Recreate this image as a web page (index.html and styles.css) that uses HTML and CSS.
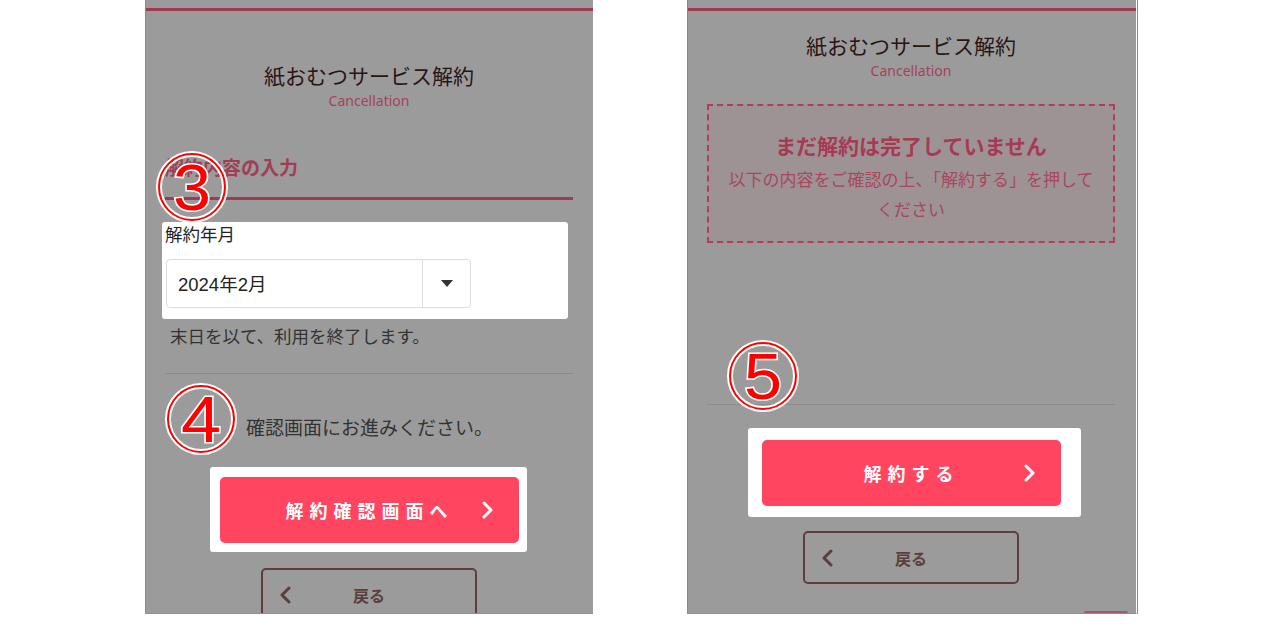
FILE: index.html
```html
<!DOCTYPE html>
<html lang="ja">
<head>
  <meta charset="UTF-8" />
  <meta name="viewport" content="width=device-width, initial-scale=1.0" />
  <title>紙おむつサービス解約</title>
  <link rel="stylesheet" href="styles.css">
</head>
<body>
  <div class="page">

    <!-- 入力画面 -->
    <section class="phone phone-left">
      <div class="topbar"></div>
      <header class="title">
        <h1>紙おむつサービス解約</h1>
        <p>Cancellation</p>
      </header>

      <h2 class="section-head">解約内容の入力</h2>

      <div class="spot field">
        <label>解約年月</label>
        <div class="select">
          <span class="select-value">2024年2月</span>
          <span class="select-btn"><span class="caret"></span></span>
        </div>
      </div>
      <p class="note">末日を以て、利用を終了します。</p>

      <hr class="rule rule-left">

      <p class="lead">確認画面にお進みください。</p>

      <div class="spot btn-wrap wrap-left">
        <button class="primary">
          <span></span>
          <span class="label">解約確認画面へ</span>
          <svg class="chev" width="12" height="18" viewBox="0 0 12 18"><polyline points="2,2 9,9 2,16" /></svg>
        </button>
      </div>

      <button class="back">
        <svg class="chev" width="12" height="18" viewBox="0 0 12 18"><polyline points="10,2 3,9 10,16" /></svg>
        <span class="label">戻る</span>
        <span></span>
      </button>

      <svg class="badge badge-3" width="76" height="76" viewBox="0 0 76 76">
        <circle cx="38" cy="38" r="33" class="ring-w" />
        <circle cx="38" cy="38" r="33" class="ring-r" />
        <text x="38" y="61" textLength="38" lengthAdjust="spacingAndGlyphs">3</text>
      </svg>
      <svg class="badge badge-4" width="76" height="76" viewBox="0 0 76 76">
        <circle cx="38" cy="38" r="33" class="ring-w" />
        <circle cx="38" cy="38" r="33" class="ring-r" />
        <text x="38" y="61" textLength="40" lengthAdjust="spacingAndGlyphs">4</text>
      </svg>
    </section>

    <!-- 確認画面 -->
    <section class="phone phone-right">
      <div class="topbar"></div>
      <header class="title title-tight">
        <h1>紙おむつサービス解約</h1>
        <p>Cancellation</p>
      </header>

      <div class="warning">
        <h3>まだ解約は完了していません</h3>
        <p>以下の内容をご確認の上、「解約する」を押してください</p>
      </div>

      <hr class="rule rule-right">

      <div class="spot btn-wrap wrap-right">
        <button class="primary">
          <span></span>
          <span class="label">解約する</span>
          <svg class="chev" width="12" height="18" viewBox="0 0 12 18"><polyline points="2,2 9,9 2,16" /></svg>
        </button>
      </div>

      <button class="back">
        <svg class="chev" width="12" height="18" viewBox="0 0 12 18"><polyline points="10,2 3,9 10,16" /></svg>
        <span class="label">戻る</span>
        <span></span>
      </button>

      <div class="pagetop"></div>

      <svg class="badge badge-5" width="76" height="76" viewBox="0 0 76 76">
        <circle cx="38" cy="38" r="33" class="ring-w" />
        <circle cx="38" cy="38" r="33" class="ring-r" />
        <text x="38" y="61" textLength="38" lengthAdjust="spacingAndGlyphs">5</text>
      </svg>
    </section>

  </div>
</body>
</html>
```

FILE: styles.css
```css
body {
  margin: 0;
  background: #fff;
  font-family: "Noto Sans CJK JP", "Noto Sans", sans-serif;
  color: #333;
}
.page {
  display: flex;
  align-items: flex-start;
  gap: 94px;
  padding-left: 145px;
}
.phone {
  position: relative;
  box-sizing: border-box;
  height: 614px;
  overflow: hidden;
  background: #9b9b9b;
  border-left: 1px solid #8a8a8a;
  border-bottom: 1px solid #8e8e8e;
}
.phone-left {
  width: 448px;
  padding: 0 20px 0 19px;
}
.phone-right {
  width: 450px;
  padding: 0 21px 0 19px;
  border-right: 1px solid #fff;
  box-shadow: 1px 0 0 #8c8c8c;
}
.topbar {
  height: 8px;
  margin: 0 -21px 0 -20px;
  border-bottom: 3px solid #9f3a51;
}
.title {
  text-align: center;
  padding-top: 50px;
}
.title-tight {
  padding-top: 20px;
}
.title h1 {
  margin: 0;
  font-size: 21px;
  line-height: 28px;
  font-weight: 400;
  color: #2a1515;
}
.title p {
  margin: 2px 0 0;
  font-family: "Noto Sans", sans-serif;
  font-size: 14px;
  line-height: 20px;
  color: #a3435a;
}
.section-head {
  margin: 43px 0 0;
  padding-bottom: 17px;
  border-bottom: 3px solid #a03a52;
  font-size: 19px;
  line-height: 26px;
  font-weight: 700;
  color: #a23d56;
}
.spot {
  background: #fff;
  border-radius: 3px;
}
.field {
  margin: 22px 0 0 -3px;
  width: 406px;
  box-sizing: border-box;
  padding: 1px 0 11px 3px;
}
.field label {
  display: block;
  font-size: 17.5px;
  line-height: 22px;
  color: #222;
}
.select {
  display: flex;
  width: 305px;
  height: 49px;
  box-sizing: border-box;
  margin: 14px 0 0 1px;
  border: 1px solid #dcdcdc;
  border-radius: 4px;
}
.select-value {
  flex: 1;
  display: flex;
  align-items: center;
  padding: 0 0 1px 11px;
  font-family: "Liberation Sans", "Noto Sans CJK JP", sans-serif;
  font-size: 18.5px;
  color: #222;
  border-right: 1px solid #dcdcdc;
}
.select-btn {
  width: 47px;
  display: flex;
  align-items: center;
  justify-content: center;
}
.caret {
  width: 0;
  height: 0;
  border-left: 6px solid transparent;
  border-right: 6px solid transparent;
  border-top: 7px solid #333;
}
.note {
  margin: 6px 0 0;
  padding-left: 5px;
  font-size: 17.5px;
  line-height: 22px;
  color: #333;
}
.rule {
  margin: 0;
  border: 0;
  border-top: 1px solid #8b8b8b;
}
.rule-left {
  margin-top: 26px;
}
.rule-right {
  margin-top: 161px;
}
.lead {
  margin: 40px 0 0;
  padding-left: 81px;
  font-size: 19px;
  line-height: 26px;
  color: #333;
}
.btn-wrap {
  box-sizing: border-box;
}
.wrap-left {
  width: 317px;
  margin: 27px 0 0 45px;
  padding: 10px 8px 9px 10px;
}
.wrap-right {
  width: 333px;
  margin: 23px 0 0 41px;
  padding: 12px 20px 11px 14px;
}
button {
  font-family: "Noto Sans CJK JP", sans-serif;
  padding: 0;
  cursor: pointer;
}
.primary {
  display: grid;
  grid-template-columns: 1fr auto 1fr;
  align-items: center;
  width: 299px;
  height: 66px;
  border: 0;
  border-radius: 5px;
  background: #ff4560;
  color: #fff;
  font-size: 18px;
  font-weight: 700;
  letter-spacing: 6px;
}
.primary .chev {
  justify-self: end;
  margin-right: 25px;
}
.primary .chev polyline {
  fill: none;
  stroke: #fff;
  stroke-width: 3;
  stroke-linecap: round;
  stroke-linejoin: round;
}
.back {
  display: grid;
  grid-template-columns: 1fr auto 1fr;
  align-items: center;
  width: 216px;
  height: 53px;
  margin: 16px auto 0;
  background: transparent;
  border: 2px solid #5b3e3e;
  border-radius: 5px;
  color: #5b3e3e;
  font-size: 16px;
  font-weight: 700;
}
.phone-right .back {
  margin-top: 14px;
}
.back .chev {
  justify-self: start;
  margin-left: 16px;
}
.back .chev polyline {
  fill: none;
  stroke: #5b3e3e;
  stroke-width: 3;
  stroke-linecap: round;
  stroke-linejoin: round;
}
.warning {
  margin-top: 23px;
  height: 139px;
  box-sizing: border-box;
  padding: 25px 15px 17px;
  border: 2px dashed #b23d5b;
  background: #9d9394;
  text-align: center;
}
.warning h3 {
  margin: 0;
  font-size: 21px;
  line-height: 28px;
  font-weight: 700;
  color: #a63a55;
}
.warning p {
  margin: 5px 0 0;
  font-size: 17px;
  line-height: 30px;
  color: #a8475e;
}
.pagetop {
  position: absolute;
  left: 396px;
  bottom: 0;
  width: 44px;
  height: 2px;
  background: #a25b6c;
  border-radius: 2px 2px 0 0;
}
.badge {
  position: absolute;
}
.badge-3 { left: 8px; top: 149px; }
.badge-4 { left: 17px; top: 381px; }
.badge-5 { left: 37px; top: 338px; }
.ring-w {
  fill: none;
  stroke: #fff;
  stroke-width: 6;
}
.ring-r {
  fill: none;
  stroke: #f00;
  stroke-width: 2;
}
.badge text {
  font-family: "Liberation Sans", sans-serif;
  font-size: 64px;
  text-anchor: middle;
  fill: #f00;
  stroke: #fff;
  stroke-width: 3;
  paint-order: stroke;
}
```
